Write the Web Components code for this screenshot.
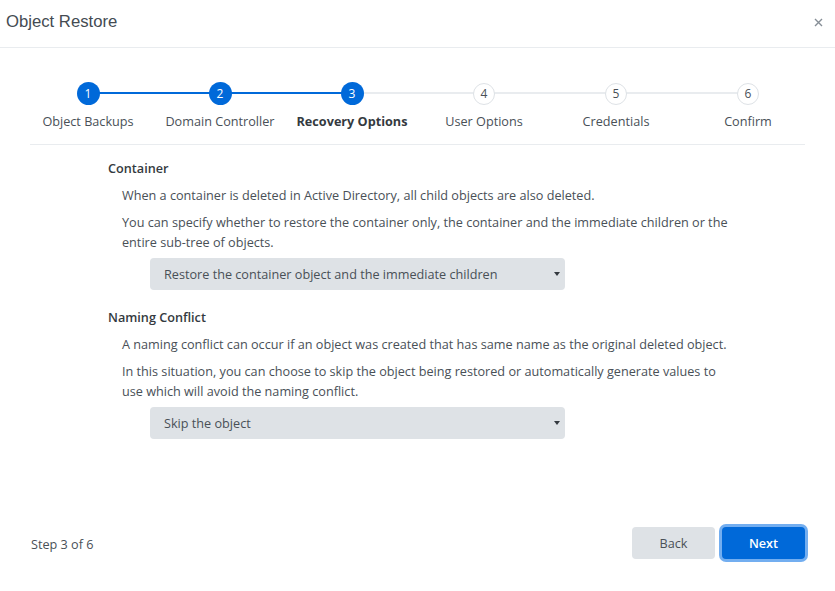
<!DOCTYPE html>
<html><head><meta charset="utf-8"><style>
html,body{margin:0;padding:0;background:#fff}
body{font-family:"Open Sans","Noto Sans",sans-serif;font-size:12.66px;color:#212529}
</style></head><body>
<restore-dialog></restore-dialog>
<script>
const def=(name,html)=>customElements.define(name,class extends HTMLElement{
  connectedCallback(){if(this.shadowRoot)return;const r=this.attachShadow({mode:'open'});r.innerHTML=typeof html==='function'?html(this):html;}
});
def('dialog-header',`<style>
:host{display:flex;align-items:center;justify-content:space-between;border-bottom:1px solid #e9ecef;padding:0 12px 3px 6px;height:44px}
.t{font:16.7px/20px "Liberation Sans",Arial,sans-serif;color:#444b52}
svg{display:block}
</style><span class="t"><slot></slot></span>
<svg width="9" height="9" viewBox="0 0 9 9" aria-hidden="true"><path d="M1 1l7 7M8 1l-7 7" stroke="#868e96" stroke-width="1.4" fill="none"/></svg>`);
def('wizard-step',el=>{
  const done=el.hasAttribute('done'),cur=el.hasAttribute('current'),line=el.getAttribute('line');
  return `<style>
:host{display:flex;flex-direction:column;align-items:center;position:relative;width:132px}
.c{width:${done?23:22}px;height:${done?23:22}px;box-sizing:border-box;border-radius:50%;display:flex;align-items:center;justify-content:center;font-size:12px;z-index:1;
background:${done?'#0069d9':'#fff'};color:${done?'#fff':'#495057'};border:${done?'0':'1px solid #dee2e6'};margin:${done?0:'.5px'};}
.l{margin-top:6px;line-height:20px;white-space:nowrap;font-size:12.66px;color:${cur?'#343a40':'#495057'};font-weight:${cur?700:400}}
.b{position:absolute;left:50%;width:132px;top:10px;height:2px;background:${line==='on'?'#0069d9':'#e9ecef'}}
</style>${line?'<div class="b"></div>':''}<div class="c">${el.getAttribute('n')}</div><div class="l"><slot></slot></div>`;
});
def('wizard-steps',`<style>:host{display:flex;justify-content:flex-start;margin:0 30px;padding:34px 0 13px;border-bottom:1px solid #e9ecef}
.w{display:flex;margin:0 -8px}</style><div class="w"><slot></slot></div>`);
def('option-section',el=>`<style>
:host{display:block;margin:0}
h3{margin:0 0 7px;font-size:12.66px;line-height:20px;font-weight:600;color:#343a40}
.p{padding-left:14px;color:#495057;line-height:20px;width:606px}
::slotted(p){margin:0 0 7px}
</style><h3>${el.getAttribute('heading')}</h3><div class="p"><slot></slot></div><slot name="control"></slot>`);
def('select-box',`<style>
:host{display:flex;align-items:center;justify-content:space-between;width:415px;height:32px;box-sizing:border-box;margin:-1px 0 0 42px;padding:0 5px 0 14px;background:#dee2e6;border-radius:4px;color:#495057;line-height:20px}
svg{display:block}
</style><span><slot></slot></span><svg width="6" height="4" viewBox="0 0 6 4" aria-hidden="true"><path d="M0 0h6L3 4z" fill="#343a40"/></svg>`);
def('wizard-button',el=>{const p=el.hasAttribute('primary');return `<style>
:host{display:flex;align-items:center;justify-content:center;box-sizing:border-box;width:83px;height:32px;border-radius:4px;
background:${p?'#0069d9':'#dee2e6'};color:${p?'#fff':'#495057'};font-weight:${p?600:400};line-height:20px;${p?'box-shadow:0 0 0 3px #73aef0;':''}}
</style><slot></slot>`});
def('dialog-footer',`<style>
:host{display:flex;align-items:center;justify-content:space-between;padding:0 30px 0 31px;height:32px;margin-top:88px}
.b{display:flex;gap:7px}
.s{color:#495057;padding-top:2px}
</style><span class="s"><slot name="status"></slot></span><div class="b"><slot></slot></div>`);
def('restore-dialog',`<style>
:host{display:block;width:835px;height:591px;overflow:hidden;background:#fff}
.m{padding:13px 0 0 108px;display:flex;flex-direction:column;gap:17px}
</style>
<dialog-header>Object Restore</dialog-header>
<wizard-steps>
<wizard-step n="1" done line="on">Object Backups</wizard-step>
<wizard-step n="2" done line="on">Domain Controller</wizard-step>
<wizard-step n="3" done current line="off">Recovery Options</wizard-step>
<wizard-step n="4" line="off">User Options</wizard-step>
<wizard-step n="5" line="off">Credentials</wizard-step>
<wizard-step n="6">Confirm</wizard-step>
</wizard-steps>
<div class="m">
<option-section heading="Container">
<p>When a container is deleted in Active Directory, all child objects are also deleted.</p>
<p>You can specify whether to restore the container only, the container and the immediate children or the entire sub-tree of objects.</p>
<select-box slot="control">Restore the container object and the immediate children</select-box>
</option-section>
<option-section heading="Naming Conflict">
<p>A naming conflict can occur if an object was created that has same name as the original deleted object.</p>
<p>In this situation, you can choose to skip the object being restored or automatically generate values to use which will avoid the naming conflict.</p>
<select-box slot="control">Skip the object</select-box>
</option-section>
</div>
<dialog-footer><span slot="status">Step 3 of 6</span>
<wizard-button>Back</wizard-button><wizard-button primary>Next</wizard-button></dialog-footer>`);
</script></body></html>
